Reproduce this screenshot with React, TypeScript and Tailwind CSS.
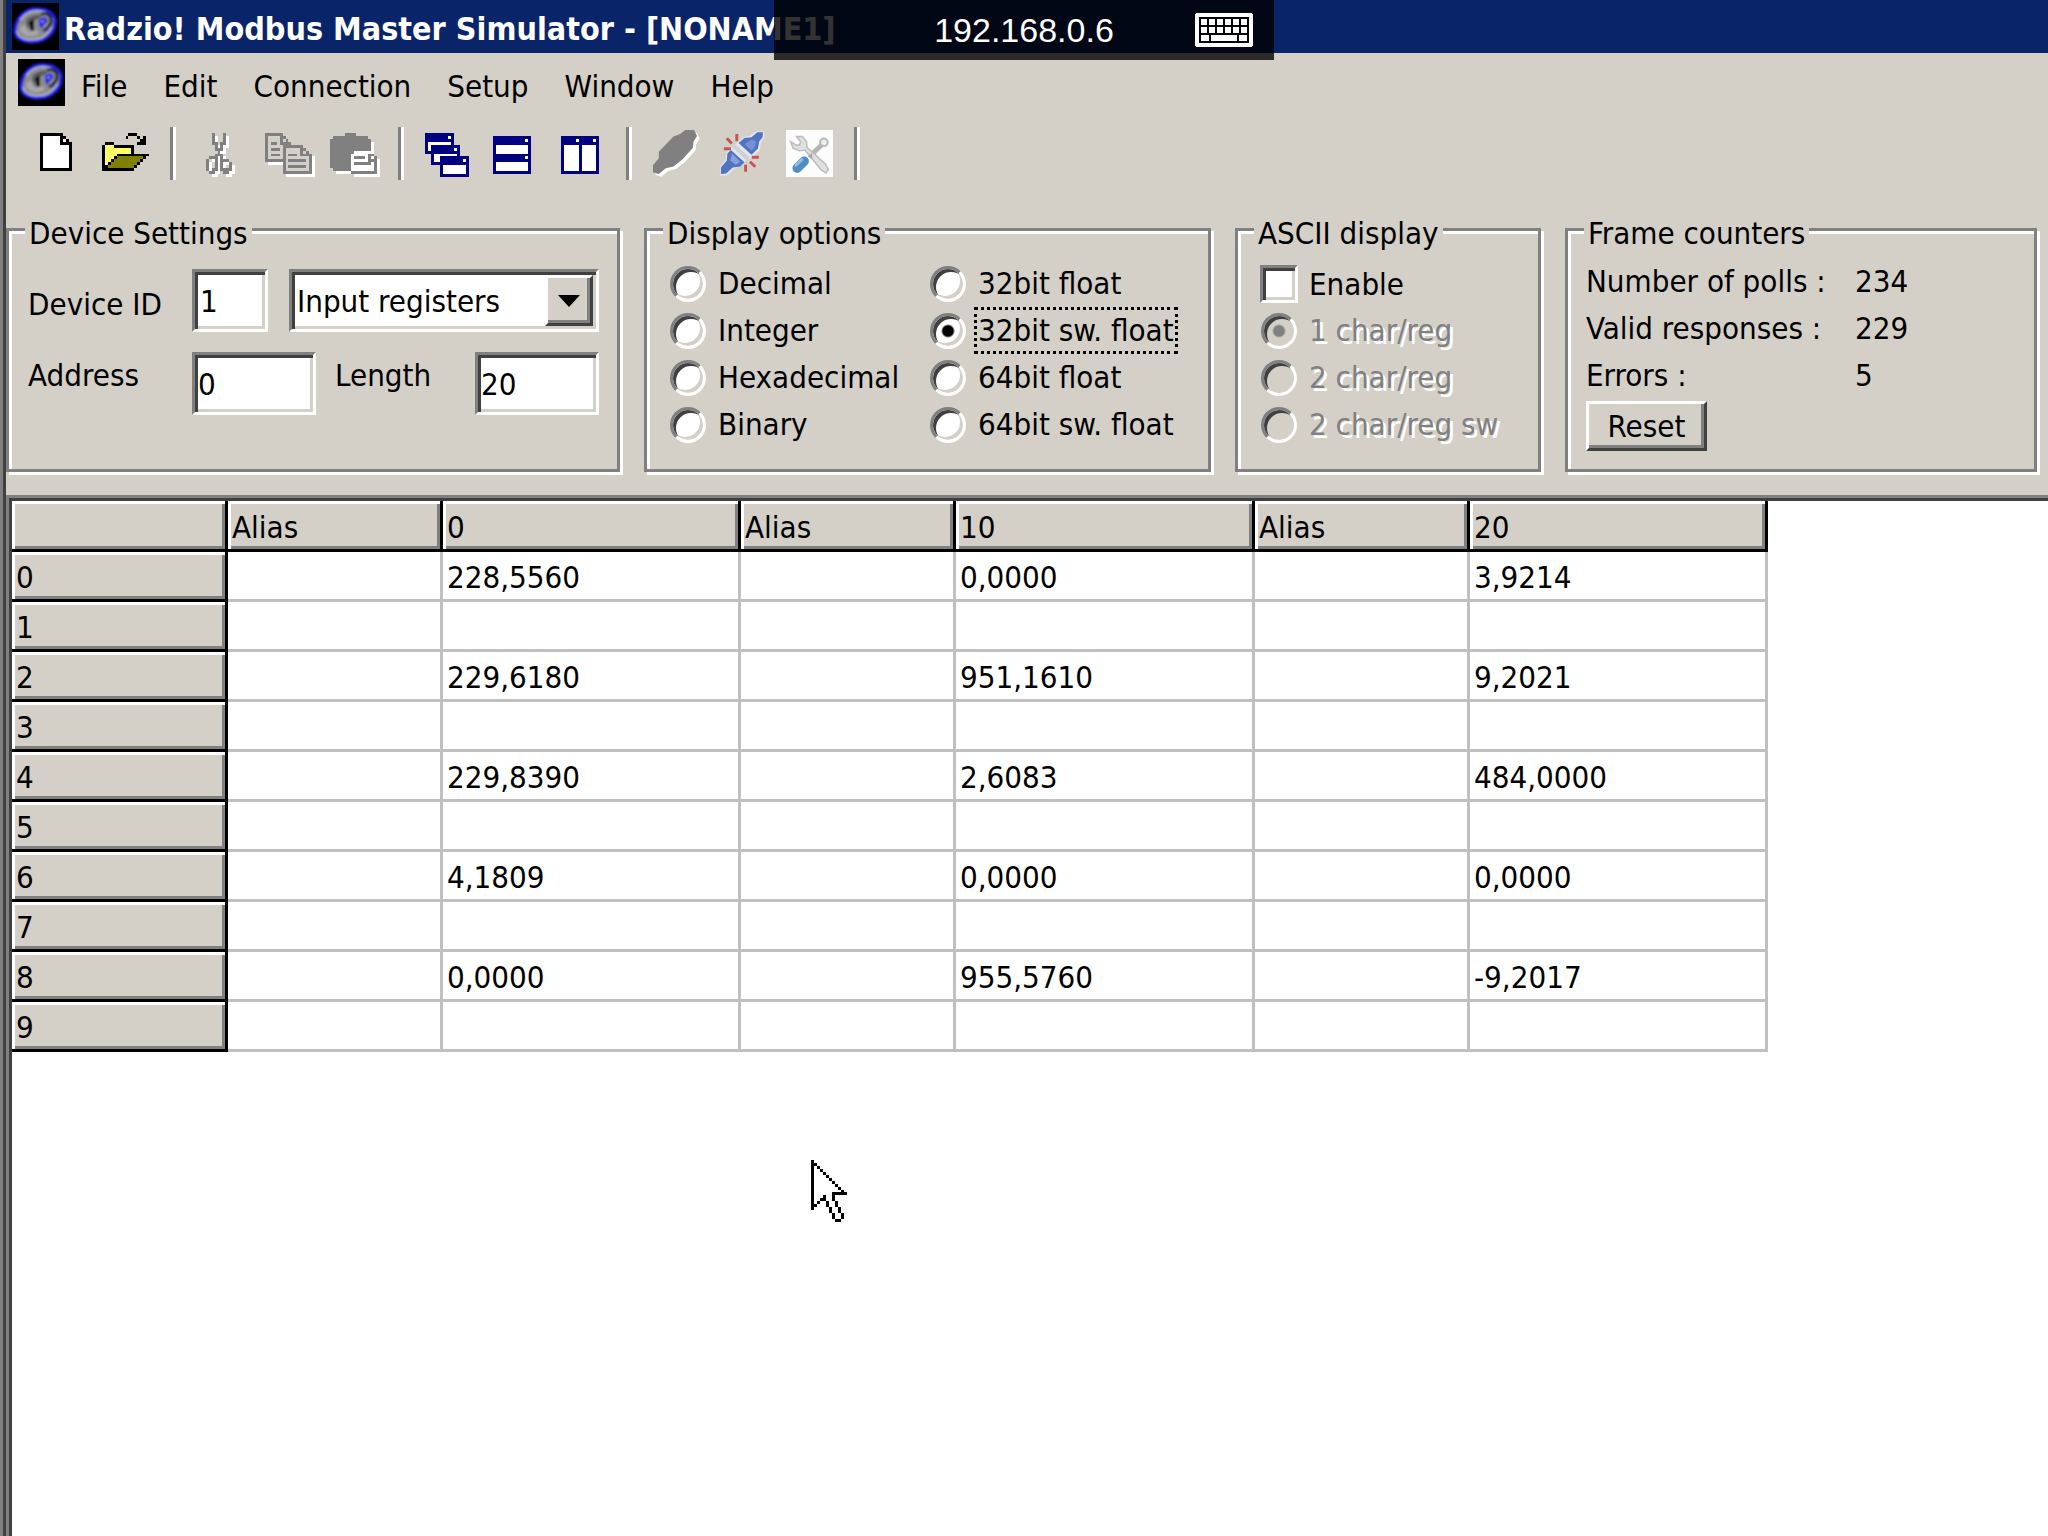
import type { ReactNode } from 'react'
import clsx from 'clsx'

const SUNKEN =
  'border-3 border-t-[#808080] border-l-[#808080] border-r-white border-b-white shadow-[inset_3px_3px_0_#404040,inset_-3px_-3px_0_#d4d0c8]'
const RAISED =
  'border-3 border-t-white border-l-white border-r-[#404040] border-b-[#404040] shadow-[inset_-3px_-3px_0_#808080]'

const menuItems = ['File', 'Edit', 'Connection', 'Setup', 'Window', 'Help']

const displayOptions = [
  ['Decimal', 'Integer', 'Hexadecimal', 'Binary'],
  ['32bit float', '32bit sw. float', '64bit float', '64bit sw. float'],
]

const asciiModes = ['1 char/reg', '2 char/reg', '2 char/reg sw']

const counters = [
  { label: 'Number of polls :', value: '234' },
  { label: 'Valid responses :', value: '229' },
  { label: 'Errors :', value: '5' },
]

const columns = ['Alias', '0', 'Alias', '10', 'Alias', '20']

const rows = [
  ['228,5560', '0,0000', '3,9214'],
  ['', '', ''],
  ['229,6180', '951,1610', '9,2021'],
  ['', '', ''],
  ['229,8390', '2,6083', '484,0000'],
  ['', '', ''],
  ['4,1809', '0,0000', '0,0000'],
  ['', '', ''],
  ['0,0000', '955,5760', '-9,2017'],
  ['', '', ''],
]

const palette: Record<string, string> = {
  k: '#000000',
  w: '#ffffff',
  s: '#d4d0c8',
  y: '#ffff66',
  o: '#808000',
  g: '#808080',
  n: '#000080',
}

const newArt = [
  '',
  '  kkkkkkkk',
  '  kwwwwwwkk',
  '  kwwwwwwkwk',
  '  kwwwwwwkkkk',
  '  kwwwwwwwwwk',
  '  kwwwwwwwwwk',
  '  kwwwwwwwwwk',
  '  kwwwwwwwwwk',
  '  kwwwwwwwwwk',
  '  kwwwwwwwwwk',
  '  kwwwwwwwwwk',
  '  kwwwwwwwwwk',
  '  kkkkkkkkkkk',
]

const openArt = [
  '',
  '         kkk',
  '        k   k k',
  '             kk',
  ' kkk        kkk',
  'kyyykkkkkkk',
  'kyyyyyyyyyk',
  'kyyyyyyyyyk',
  'kyyyykkkkkkkkkkk',
  'kyyykoooooooook',
  'kyykoooooooook',
  'kykoooooooook',
  'kkoooooooook',
  'kkkkkkkkkkk',
]

const cutArt = [
  '',
  '      g   g',
  '      g   g',
  '      g   g',
  '      gg gg',
  '       g g',
  '       ggg',
  '        g',
  '       ggg',
  '     ggg g',
  '    g  g ggg',
  '    g  g g  g',
  '    g  g g  g',
  '    g gg gggg',
  '     gg   gg',
]

const copyArt = [
  '',
  ' gggggg',
  ' gssssgg',
  ' gssssgsg',
  ' gsggsgggg',
  ' gsssssggggggg',
  ' gsgggsgsssssgg',
  ' gsssssgsssssgsg',
  ' gsgggsgsgggsgggg',
  ' gsssssgssssssssg',
  ' gggggggsggggggsg',
  '       gssssssssg',
  '       gsggggggsg',
  '       gssssssssg',
  '       gggggggggg',
]

const pasteArt = [
  '',
  '     gggg',
  ' gggggggggggg',
  'gggggggggggggg',
  'gggggggggggggg',
  'gggggggggggggg',
  'gggggggggggggg',
  'ggggggggwwwwww',
  'gggggggwwwwwwgg',
  'gggggggwggggwgwg',
  'gggggggwwwwwwggg',
  'gggggggwggggggwg',
  'gggggggwwwwwwwwg',
  ' ggggggwwwwwwwwg',
  '       ggggggggg',
]

const cascadeArt = [
  '',
  ' nnnnnnnnnn',
  ' nnnnnnnnwn',
  ' nnnnnnnnnn',
  ' nwwwwwwwwn',
  ' nwnnnnnnnnnn',
  ' nwnnnnnnnnwn',
  ' nnnnnnnnnnnn',
  '   nwwwwwwwwn',
  '   nwwnnnnnnnnnn',
  '   nwwnnnnnnnnwn',
  '   nnnnnnnnnnnnn',
  '      nwwwwwwwwn',
  '      nwwwwwwwwn',
  '      nwwwwwwwwn',
  '      nnnnnnnnnn',
]

const tileHorizontalArt = [
  '',
  '',
  ' nnnnnnnnnnnnn',
  ' nnnnnnnnnnnwn',
  ' nnnnnnnnnnnnn',
  ' nwwwwwwwwwwwn',
  ' nwwwwwwwwwwwn',
  ' nwwwwwwwwwwwn',
  ' nnnnnnnnnnnnn',
  ' nnnnnnnnnnnwn',
  ' nnnnnnnnnnnnn',
  ' nwwwwwwwwwwwn',
  ' nwwwwwwwwwwwn',
  ' nwwwwwwwwwwwn',
  ' nnnnnnnnnnnnn',
]

const tileVerticalArt = [
  '',
  '',
  ' nnnnnnnnnnnnn',
  ' nnnnnwnnnnnwn',
  ' nnnnnnnnnnnnn',
  ' nwwwwwnwwwwwn',
  ' nwwwwwnwwwwwn',
  ' nwwwwwnwwwwwn',
  ' nwwwwwnwwwwwn',
  ' nwwwwwnwwwwwn',
  ' nwwwwwnwwwwwn',
  ' nwwwwwnwwwwwn',
  ' nwwwwwnwwwwwn',
  ' nwwwwwnwwwwwn',
  ' nnnnnnnnnnnnn',
]

const cursorArt = [
  'k',
  'kk',
  'kwk',
  'kwwk',
  'kwwwk',
  'kwwwwk',
  'kwwwwwk',
  'kwwwwwwk',
  'kwwwwwwwk',
  'kwwwwwwwwk',
  'kwwwwwwwwwk',
  'kwwwwwwkkkkk',
  'kwwwkwwk',
  'kwwkkwwk',
  'kwk  kwwk',
  'kk   kwwk',
  'k     kwwk',
  '      kwwk',
  '       kwwk',
  '       kwwk',
  '        kk',
]

// one rect per run of equal pixels
function Pixels({ art, color }: { art: string[]; color?: string }) {
  return (
    <>
      {art.flatMap((line, y) =>
        [...line.matchAll(/([a-z])\1*/g)].map((run) => (
          <rect
            key={`${run.index}-${y}`}
            x={run.index}
            y={y}
            width={run[0].length}
            height={1}
            fill={color ?? palette[run[1]]}
          />
        )),
      )}
    </>
  )
}

function PixelIcon({ art, embossed }: { art: string[]; embossed?: boolean }) {
  return (
    <svg viewBox="0 0 16 16" className="size-[47px] overflow-visible" shapeRendering="crispEdges" aria-hidden="true">
      {embossed && (
        <g transform="translate(1 1)">
          <Pixels art={art} color="#ffffff" />
        </g>
      )}
      <Pixels art={art} />
    </svg>
  )
}

const PLUG =
  'M12 0 L15 0 L16 2 L14.8 4 L14.6 6 L11 10 L8 12.4 L5.4 13 L3 15 L1 14.4 L1 12 L3 9.6 L3 7.4 L8 2.2 L10.3 1.4 Z'

function PlugIcon() {
  return (
    <svg viewBox="0 0 16 16" className="size-[47px] overflow-visible" aria-hidden="true">
      <path d={PLUG} fill="#fff" transform="translate(.9 .9)" />
      <path d={PLUG} fill="#808080" />
    </svg>
  )
}

function UnplugIcon() {
  return (
    <svg viewBox="0 0 16 16" className="size-[47px] overflow-visible" aria-hidden="true">
      <path
        d="M13 .4 L15.6 .4 L15.8 2.4 L14.6 4.4 L14.2 6.8 L11.6 9.4 L9.6 10.2 L8 12 L5.6 13.2 L3.2 15.4 L.8 15.6 L.6 12.6 L2.6 10 L3 7.6 L6 4.8 L8.4 2.6 L10.6 2 Z"
        fill="#e4e6ee"
      />
      <path d="M13.4 .8 L15.3 .8 L15.2 2.4 L14 4 L13.6 6.3 L11.4 8.4 L7 4.4 L9 2.7 L11.4 2.5 Z" fill="#5273c0" />
      <path d="M11.6 3.2 L13 4 L12.4 6 L11.4 7 L9 4.8 Z" fill="#7590d4" />
      <path d="M4.4 6.8 L9 11 L7.6 12.4 L5 12.8 L2.8 14.8 L1 15 L1 12.8 L3 10.4 L3.2 8 Z" fill="#5273c0" />
      <path d="M4.8 8 L7.6 10.8 L6 11.8 L4.2 10.4 Z" fill="#86a0de" />
      <path d="M5.2 5.2 L10.2 9.8" stroke="#d0d0d4" strokeWidth="1.5" />
      <path
        d="M6.4 1.4 V3.8 M3 2.8 L4.7 4.6 M2 6.4 H4.4 M11.5 9.3 H13.9 M10.9 10.8 L12.7 12.5 M9.4 11.8 V14.2"
        stroke="#c85256"
        strokeWidth="1"
      />
    </svg>
  )
}

function ToolsIcon() {
  return (
    <svg viewBox="0 0 16 16" className="size-[47px]" aria-hidden="true">
      <rect width="16" height="16" fill="#fcfcfc" />
      <path d="M8.6 8.4 L12.2 5" stroke="#b4b4b4" strokeWidth="1.6" />
      <circle cx="12.9" cy="4.2" r="1.3" fill="#eee" stroke="#b9b9b9" strokeWidth=".7" />
      <path
        d="M1.6 4 L2.4 6.2 L4.6 7.1 L6.4 6.8 L12 13.6 L13.6 14.6 L14.4 13.4 L13.4 11.6 L7.2 6 L7 4 L5.6 2.2 L3.6 2.2 L5 4 L4.6 5.2 L3.2 5 Z"
        fill="#e0e0e0"
        stroke="#bcbcbc"
        strokeWidth=".5"
      />
      <path d="M7.4 9 L9 9.8 L8.8 7.8 Z" fill="#a4a4a4" />
      <path d="M3.8 13 L6.2 10.6" stroke="#4f8cc6" strokeWidth="3.2" strokeLinecap="round" />
      <path d="M3.4 12 L5.4 10.1" stroke="#93bfe6" strokeWidth="1" strokeLinecap="round" />
    </svg>
  )
}

function AppIcon() {
  return (
    <svg viewBox="0 0 47 47" className="size-[47px] shrink-0" aria-hidden="true">
      <defs>
        <filter id="soften">
          <feGaussianBlur stdDeviation=".9" />
        </filter>
      </defs>
      <rect width="47" height="47" fill="#000" />
      <g filter="url(#soften)">
        <path
          d="M7 15 C12 8 20 5 28 6 C37 6 44 13 43 20 C43 27 38 34 31 37 C24 40 12 40 6 35 C1 30 3 21 7 15 Z"
          fill="#8c8c8c"
          stroke="#1c1ce0"
          strokeWidth="3.5"
        />
        <path
          d="M8 17 C13 10 20 7 28 8 C35 9 40 13 41 18 M5 28 C6 36 18 39 29 35 C34 32 38 28 40 24"
          fill="none"
          stroke="#b8b8dc"
          strokeWidth="1.5"
        />
        <path d="M8 24 C8 33 18 35 27 31 L25 27 L17 29 L13 22 Z" fill="#a8a8a8" />
        <path d="M14 17 C18 12 25 11 31 12 L26 16 L18 19 L15 27 Z" fill="#5c5c5c" />
        <path d="M17 19 L22 16 V28 L18 27 Z" fill="#0c0c0c" />
        <path d="M29 11 C35 9 40 13 39 19 C38 23 35 26 31 28" fill="none" stroke="#202028" strokeWidth="3" />
        <path d="M27 16 L33 14 L36 18 L32 22 L29 26 L27 22 Z" fill="#2222f0" />
        <path d="M29 19 L32 18" stroke="#9090c8" strokeWidth="2" />
        <path d="M34 28 L36 26" stroke="#2222e0" strokeWidth="2" />
      </g>
    </svg>
  )
}

function KeyboardIcon() {
  return (
    <svg viewBox="0 0 58 34" className="h-[34px] w-[58px]" shapeRendering="crispEdges" aria-hidden="true">
      <rect width="58" height="34" rx="3" fill="#fff" />
      <rect x="4" y="4" width="50" height="26" fill="#00040f" />
      {[6, 14, 22, 30, 38, 46].map((x) => (
        <g key={x} fill="#fff">
          <rect x={x} y="6" width="6" height="6" />
          <rect x={x} y="14" width="6" height="6" />
        </g>
      ))}
      <rect x="6" y="22" width="8" height="6" fill="#fff" />
      <rect x="16" y="22" width="26" height="6" fill="#fff" />
      <rect x="44" y="22" width="8" height="6" fill="#fff" />
    </svg>
  )
}

function ToolButton({ label, children }: { label: string; children: ReactNode }) {
  return (
    <button type="button" aria-label={label} className="flex h-[53px] w-[68px] items-center justify-center pr-1">
      {children}
    </button>
  )
}

function ToolSeparator() {
  return (
    <div className="flex w-6 justify-center">
      <div className="h-[53px] w-[6px] border-l-3 border-r-3 border-l-[#808080] border-r-white" />
    </div>
  )
}

function GroupBox({ title, children }: { title: string; children: ReactNode }) {
  return (
    <fieldset className="min-w-0 border-3 border-[#808080] pb-[18px] shadow-[3px_3px_0_#fff,inset_3px_3px_0_#fff]">
      <legend className="ml-4 bg-[#d4d0c8] px-1 pt-2">{title}</legend>
      {children}
    </fieldset>
  )
}

function Radio({
  name,
  label,
  checked,
  disabled,
  focused,
}: {
  name: string
  label: string
  checked?: boolean
  disabled?: boolean
  focused?: boolean
}) {
  return (
    <label className="flex h-[47px] items-center gap-[7px] whitespace-nowrap">
      <span className="flex w-[38px] shrink-0 justify-center">
        <input
          type="radio"
          name={name}
          defaultChecked={checked}
          disabled={disabled}
          className={clsx(
            'size-9 appearance-none rounded-full',
            SUNKEN,
            disabled
              ? 'bg-[#d4d0c8] checked:bg-[radial-gradient(circle,#808080_5px,#d4d0c8_7px)]'
              : 'bg-white checked:bg-[radial-gradient(circle,#000_5px,#fff_7px)]',
          )}
        />
      </span>
      <span
        className={clsx(
          'px-1 leading-[47px]',
          disabled && 'text-[#808080] [text-shadow:3px_3px_0_#fff]',
          focused && 'outline-3 -outline-offset-3 outline-dotted outline-black',
        )}
      >
        {label}
      </span>
    </label>
  )
}

function DeviceSettings() {
  return (
    <GroupBox title="Device Settings">
      <div className="flex flex-col gap-5 pt-[17px] pl-[19px]">
        <div className="flex">
          <label htmlFor="device-id" className="w-[164px] pt-4">
            Device ID
          </label>
          <input id="device-id" defaultValue="1" className={clsx('h-[63px] w-[76px] bg-white pl-[5px]', SUNKEN)} />
          <div className="relative ml-[21px]">
            <select
              aria-label="Register type"
              defaultValue="Input registers"
              className={clsx('h-[63px] w-[310px] appearance-none bg-white pl-[5px]', SUNKEN)}
            >
              <option>Coil status</option>
              <option>Input status</option>
              <option>Holding registers</option>
              <option>Input registers</option>
            </select>
            <span
              className={clsx(
                'pointer-events-none absolute inset-y-[6px] right-[6px] flex w-12 items-center justify-center bg-[#d4d0c8]',
                RAISED,
              )}
            >
              <svg viewBox="0 0 22 12" className="h-3 w-[22px]" aria-hidden="true">
                <path d="M0 0 H22 L11 12 Z" fill="#000" />
              </svg>
            </span>
          </div>
        </div>
        <div className="flex">
          <label htmlFor="address" className="w-[164px] pt-1">
            Address
          </label>
          <input id="address" defaultValue="0" className={clsx('h-[63px] w-[124px] bg-white pl-[3px]', SUNKEN)} />
          <label htmlFor="length" className="ml-[19px] w-[140px] pt-1">
            Length
          </label>
          <input id="length" defaultValue="20" className={clsx('h-[63px] w-[124px] bg-white pl-[3px]', SUNKEN)} />
        </div>
      </div>
    </GroupBox>
  )
}

function DisplayOptions() {
  return (
    <GroupBox title="Display options">
      <div className="grid grid-cols-[260px_1fr] pt-2 pl-[22px]">
        {displayOptions.map((group) => (
          <div key={group[0]}>
            {group.map((label) => {
              const active = label === '32bit sw. float'
              return <Radio key={label} name="display" label={label} checked={active} focused={active} />
            })}
          </div>
        ))}
      </div>
    </GroupBox>
  )
}

function AsciiDisplay() {
  return (
    <GroupBox title="ASCII display">
      <div className="pt-2 pl-[22px]">
        <label className="flex h-[47px] items-center gap-[7px]">
          <input type="checkbox" className={clsx('size-[38px] appearance-none bg-white', SUNKEN)} />
          <span className="px-1">Enable</span>
        </label>
        {asciiModes.map((label, i) => (
          <Radio key={label} name="ascii" label={label} checked={i === 0} disabled />
        ))}
      </div>
    </GroupBox>
  )
}

function FrameCounters() {
  return (
    <GroupBox title="Frame counters">
      <div className="pt-[6px] pl-[18px]">
        <dl className="grid grid-cols-[269px_1fr] leading-[47px]">
          {counters.map((item) => (
            <div key={item.label} className="contents">
              <dt>{item.label}</dt>
              <dd>{item.value}</dd>
            </div>
          ))}
        </dl>
        <button type="button" className={clsx('mt-[2px] h-[50px] w-[121px] bg-[#d4d0c8]', RAISED)}>
          Reset
        </button>
      </div>
    </GroupBox>
  )
}

const HEAD_CELL =
  'border-r-3 border-b-3 border-black bg-[#d4d0c8] pt-[3px] pl-1 text-left font-normal shadow-[inset_3px_3px_0_#fff,inset_-3px_-3px_0_#808080]'

function RegisterGrid() {
  return (
    <table className="w-[1756px] table-fixed border-separate border-spacing-0">
      <colgroup>
        <col className="w-[216px]" />
        <col className="w-[215px]" />
        <col className="w-[298px]" />
        <col className="w-[215px]" />
        <col className="w-[299px]" />
        <col className="w-[215px]" />
        <col className="w-[298px]" />
      </colgroup>
      <thead>
        <tr className="h-[51px]">
          <td className={HEAD_CELL} />
          {columns.map((title, i) => (
            <th key={i} scope="col" className={HEAD_CELL}>
              {title}
            </th>
          ))}
        </tr>
      </thead>
      <tbody>
        {rows.map((values, i) => (
          <tr key={i} className="h-[50px]">
            <th scope="row" className={HEAD_CELL}>
              {i}
            </th>
            {values.flatMap((value, j) => [
              <td key={`alias-${j}`} className="border-r-3 border-b-3 border-[#c0c0c0]" />,
              <td key={`value-${j}`} className="border-r-3 border-b-3 border-[#c0c0c0] pt-[3px] pl-1">
                {value}
              </td>,
            ])}
          </tr>
        ))}
      </tbody>
    </table>
  )
}

export default function App() {
  return (
    <div className="relative flex min-h-screen flex-col overflow-hidden bg-[#d4d0c8] font-['DejaVu_Sans_Condensed','DejaVu_Sans',sans-serif] text-[31px] leading-[38px] text-black">
      <div className="flex flex-1 flex-col border-l-3 border-[#808080]">
        <div className="flex flex-1 flex-col border-l-3 border-[#404040]">
          <header className="flex h-[53px] items-center gap-[5px] bg-[#0a246a] pl-[6px] text-white">
            <AppIcon />
            <h1 className="pt-1 text-[32px] font-bold whitespace-nowrap">Radzio! Modbus Master Simulator - [NONAME1]</h1>
          </header>

          <nav className="flex pt-[6px] pl-3">
            <AppIcon />
            <div className="flex gap-9 pl-4 leading-[54px]">
              {menuItems.map((item) => (
                <button key={item} type="button">
                  {item}
                </button>
              ))}
            </div>
          </nav>

          <div className="flex pt-[14px] pl-[19px]">
            <ToolButton label="New">
              <PixelIcon art={newArt} />
            </ToolButton>
            <ToolButton label="Open">
              <PixelIcon art={openArt} />
            </ToolButton>
            <ToolSeparator />
            <ToolButton label="Cut">
              <PixelIcon art={cutArt} embossed />
            </ToolButton>
            <ToolButton label="Copy">
              <PixelIcon art={copyArt} embossed />
            </ToolButton>
            <ToolButton label="Paste">
              <PixelIcon art={pasteArt} embossed />
            </ToolButton>
            <ToolSeparator />
            <ToolButton label="Cascade">
              <PixelIcon art={cascadeArt} />
            </ToolButton>
            <ToolButton label="Tile horizontally">
              <PixelIcon art={tileHorizontalArt} />
            </ToolButton>
            <ToolButton label="Tile vertically">
              <PixelIcon art={tileVerticalArt} />
            </ToolButton>
            <ToolSeparator />
            <ToolButton label="Connect">
              <PlugIcon />
            </ToolButton>
            <ToolButton label="Disconnect">
              <UnplugIcon />
            </ToolButton>
            <ToolButton label="Settings">
              <ToolsIcon />
            </ToolButton>
            <ToolSeparator />
          </div>

          <div className="grid grid-cols-[614px_567px_306px_1fr] gap-x-6 pt-[26px] pr-[11px] pb-[23px]">
            <DeviceSettings />
            <DisplayOptions />
            <AsciiDisplay />
            <FrameCounters />
          </div>

          <main className="flex flex-1 flex-col border-t-3 border-l-3 border-[#808080]">
            <div className="flex-1 border-t-3 border-l-3 border-[#404040] bg-white">
              <RegisterGrid />
            </div>
          </main>
        </div>
      </div>

      <div className="absolute top-0 left-1/2 flex h-[60px] w-[500px] -translate-x-1/2 items-center justify-center bg-black/80 font-['Liberation_Sans',sans-serif] text-[34px] text-white">
        <span>192.168.0.6</span>
        <button type="button" aria-label="Keyboard" className="absolute right-[21px]">
          <KeyboardIcon />
        </button>
      </div>

      <svg
        viewBox="0 0 12 21"
        className="pointer-events-none absolute top-[1160px] left-[811px] h-[62px] w-9"
        shapeRendering="crispEdges"
        aria-hidden="true"
      >
        <Pixels art={cursorArt} />
      </svg>
    </div>
  )
}
